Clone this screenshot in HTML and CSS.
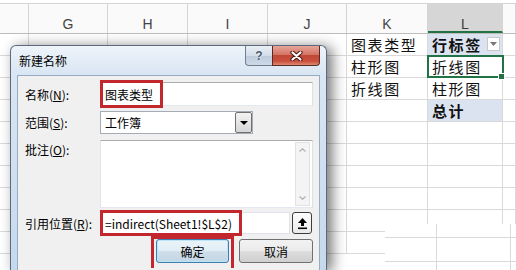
FILE: index.html
```html
<!DOCTYPE html>
<html lang="zh-CN">
<head>
  <meta charset="UTF-8">
  <title>新建名称</title>
  <link rel="stylesheet" href="styles.css">
</head>
<body>
  <div class="sheet">
    <div class="row head">
      <div class="c"></div><div class="c">G</div><div class="c">H</div><div class="c">I</div><div class="c">J</div><div class="c">K</div><div class="c active-col">L</div><div class="c"></div>
    </div>
    <div class="row">
      <div class="c"></div><div class="c"></div><div class="c"></div><div class="c"></div><div class="c"></div>
      <div class="c">图表类型</div>
      <div class="c pivot bold">行标签<span class="filter"><svg width="7" height="4" viewBox="0 0 7 4"><polygon points="0,0 7,0 3.5,4" fill="#777"/></svg></span></div>
      <div class="c"></div>
    </div>
    <div class="row">
      <div class="c"></div><div class="c"></div><div class="c"></div><div class="c"></div><div class="c"></div>
      <div class="c">柱形图</div>
      <div class="c current">折线图</div>
      <div class="c"></div>
    </div>
    <div class="row">
      <div class="c"></div><div class="c"></div><div class="c"></div><div class="c"></div><div class="c"></div>
      <div class="c">折线图</div>
      <div class="c">柱形图</div>
      <div class="c"></div>
    </div>
    <div class="row">
      <div class="c"></div><div class="c"></div><div class="c"></div><div class="c"></div><div class="c"></div>
      <div class="c"></div>
      <div class="c pivot bold">总计</div>
      <div class="c"></div>
    </div>
    <div class="row"><div class="c"></div><div class="c"></div><div class="c"></div><div class="c"></div><div class="c"></div><div class="c"></div><div class="c"></div><div class="c"></div></div>
    <div class="row"><div class="c"></div><div class="c"></div><div class="c"></div><div class="c"></div><div class="c"></div><div class="c"></div><div class="c"></div><div class="c"></div></div>
    <div class="row"><div class="c"></div><div class="c"></div><div class="c"></div><div class="c"></div><div class="c"></div><div class="c"></div><div class="c"></div><div class="c"></div></div>
    <div class="row"><div class="c"></div><div class="c"></div><div class="c"></div><div class="c"></div><div class="c"></div><div class="c"></div><div class="c"></div><div class="c"></div></div>
    <div class="row"><div class="c"></div><div class="c"></div><div class="c"></div><div class="c"></div><div class="c"></div><div class="c"></div><div class="c"></div><div class="c"></div></div>
    <div class="row"><div class="c"></div><div class="c"></div><div class="c"></div><div class="c"></div><div class="c"></div><div class="c"></div><div class="c"></div><div class="c"></div></div>
    <div class="patch"></div>
  </div>

  <div class="dialog">
    <div class="titlebar">
      <span class="title">新建名称</span>
      <div class="caps">
        <span class="cap help">?</span>
        <span class="cap close">
          <svg width="13" height="10" viewBox="0 0 13 10">
            <path d="M2.5 1.5 L10.5 8.5 M10.5 1.5 L2.5 8.5" stroke="#4a1a14" stroke-width="4.2" stroke-linecap="round"/>
            <path d="M2.5 1.5 L10.5 8.5 M10.5 1.5 L2.5 8.5" stroke="#fff" stroke-width="2.2" stroke-linecap="round"/>
          </svg>
        </span>
      </div>
    </div>
    <div class="client">
      <div class="lbl">名称(<u>N</u>):</div>
      <div class="field">
        <div class="box name">图表类型</div>
        <span class="mark mark-name"></span>
      </div>

      <div class="lbl">范围(<u>S</u>):</div>
      <div class="field">
        <div class="box combo">工作簿<span class="drop"><svg width="8" height="4" viewBox="0 0 8 4"><polygon points="0,0 8,0 4,4" fill="#000"/></svg></span></div>
      </div>

      <div class="lbl top">批注(<u>O</u>):</div>
      <div class="field">
        <div class="box memo">
          <div class="vscroll">
            <svg width="7" height="4" viewBox="0 0 7 4"><polyline points="0.5,3.5 3.5,0.8 6.5,3.5" fill="none" stroke="#b0b0b0" stroke-width="1.2"/></svg>
            <svg width="7" height="4" viewBox="0 0 7 4"><polyline points="0.5,0.5 3.5,3.2 6.5,0.5" fill="none" stroke="#b0b0b0" stroke-width="1.2"/></svg>
          </div>
        </div>
      </div>

      <div class="lbl">引用位置(<u>R</u>):</div>
      <div class="field refline">
        <div class="box ref">=indirect(Sheet1!$L$2)</div>
        <span class="pick">
          <svg width="11" height="13" viewBox="0 0 11 13">
            <polygon points="5.5,1 10,6 1,6" fill="#000"/>
            <rect x="4" y="5.5" width="3" height="3.5" fill="#000"/>
            <rect x="1" y="10.5" width="9" height="1.6" fill="#000"/>
          </svg>
        </span>
        <span class="mark mark-ref"></span>
      </div>

      <div class="actions">
        <span class="btn default">确定<span class="mark mark-ok"></span></span>
        <span class="btn">取消</span>
      </div>
    </div>
  </div>
</body>
</html>
```

FILE: styles.css
```css
body {
  margin: 0;
  width: 516px;
  height: 270px;
  overflow: hidden;
  background: #fff;
  font-family: "Noto Sans CJK SC", sans-serif;
  position: relative;
}

/* worksheet */
.sheet {
  padding-top: 3px;
  height: 270px;
  box-sizing: border-box;
  overflow: hidden;
  position: relative;
}
.row {
  display: grid;
  grid-template-columns: 29px 79px 80px 80px 79px 81px 75px 1fr;
  height: 22px;
  box-sizing: border-box;
  border-bottom: 1px solid #d9d9d9;
}
.c {
  border-right: 1px solid #d9d9d9;
  padding-left: 4px;
  font-size: 15px;
  letter-spacing: 1.6px;
  line-height: 21px;
  color: #111;
  white-space: nowrap;
  position: relative;
}
.row.head {
  height: 31px;
  border-top: 1px solid #d4d4d4;
  border-bottom: 1px solid #bdbdbd;
  background: #fafafa;
}
.head .c {
  padding: 0;
  text-align: center;
  font-family: "Liberation Sans", Arial, sans-serif;
  font-size: 14px;
  letter-spacing: 0;
  line-height: 14px;
  padding-top: 13px;
  color: #444;
  border-right-color: #d4d4d4;
}
.head .active-col {
  background: #d6d6d6;
  border-bottom: 2px solid #217346;
  color: #3d3d3d;
}
.pivot {
  background: #dce3f0;
}
.bold {
  font-weight: bold;
}
.filter {
  position: absolute;
  right: 2px;
  top: 3px;
  width: 13px;
  height: 14px;
  box-sizing: border-box;
  border: 1px solid #c8c8c8;
  background: #fff;
  display: flex;
  align-items: center;
  justify-content: center;
}
.current {
  outline: 2px solid #217346;
  outline-offset: -1px;
  z-index: 1;
}
.current::after {
  content: "";
  position: absolute;
  right: -3px;
  bottom: -3px;
  width: 5px;
  height: 5px;
  background: #217346;
  border: 1px solid #fff;
}
.patch {
  position: absolute;
  left: 385px;
  top: 224px;
  width: 131px;
  height: 46px;
  background:
    linear-gradient(#d9d9d9, #d9d9d9) 51px 0 / 1px 100% no-repeat,
    linear-gradient(#d9d9d9, #d9d9d9) 125px 0 / 1px 100% no-repeat,
    linear-gradient(#d9d9d9, #d9d9d9) 0 13px / 100% 1px no-repeat,
    linear-gradient(#d9d9d9, #d9d9d9) 0 37px / 100% 1px no-repeat,
    #fff;
}

/* dialog */
.dialog {
  position: absolute;
  left: 10px;
  top: 45px;
  width: 317px;
  height: 225px;
  box-sizing: border-box;
  border: 1px solid #5b6a7c;
  border-bottom: none;
  border-radius: 6px 6px 0 0;
  background: linear-gradient(#eef4fa 0, #d9e6f3 28px, #c5d9ed 100%);
  box-shadow: 5px 2px 14px rgba(0, 0, 0, 0.55);
  font-size: 12px;
  color: #000;
}
.titlebar {
  height: 29px;
  display: flex;
  align-items: center;
  padding-left: 8px;
}
.title {
  font-size: 12px;
}
.caps {
  margin-left: auto;
  margin-right: 6px;
  align-self: flex-start;
  display: flex;
}
.cap {
  height: 20px;
  box-sizing: border-box;
  display: flex;
  align-items: center;
  justify-content: center;
}
.help {
  width: 27px;
  border: 1px solid #6f7f90;
  border-top: none;
  border-right: none;
  border-radius: 0 0 0 4px;
  background: linear-gradient(#e8eef5 0, #d3deea 50%, #bccbdb 51%, #cdd9e6 100%);
  color: #4a5a6c;
  font-family: "Liberation Sans", Arial, sans-serif;
  font-weight: bold;
  font-size: 12px;
  text-shadow: 0 0 2px #fff;
}
.close {
  width: 48px;
  border: 1px solid #5a2a24;
  border-top: none;
  border-radius: 0 0 4px 0;
  background: linear-gradient(#e6a497 0, #d47566 45%, #c14736 50%, #c9503e 80%, #dd8a70 100%);
}
.client {
  margin: 0 6px;
  height: 195px;
  box-sizing: border-box;
  border: 1px solid #98abc0;
  border-bottom: none;
  background: #f0f0f0;
  padding: 6px 6px 0 7px;
  display: grid;
  grid-template-columns: 75px 1fr;
  grid-template-rows: 24px 23px 68px 22px 24px;
  row-gap: 5px;
  align-items: center;
}
.lbl {
  white-space: nowrap;
}
.lbl.top {
  align-self: start;
  padding-top: 2px;
}
.field {
  position: relative;
  height: 100%;
  display: flex;
}
.box {
  box-sizing: border-box;
  height: 100%;
  background: #fff;
  border: 1px solid #abadb3;
  border-color: #abadb3 #dbdfe6 #e3e9ef #e2e3ea;
  padding-left: 4px;
  display: flex;
  align-items: center;
}
.name {
  width: 213px;
}
.combo {
  width: 153px;
  border: 1px solid #a5acb5;
  position: relative;
}
.drop {
  margin-left: auto;
  width: 17px;
  height: 21px;
  box-sizing: border-box;
  border: 1px solid #707070;
  border-radius: 2px;
  background: linear-gradient(#f3f3f3, #e5e5e5 50%, #d6d6d6);
  display: flex;
  align-items: center;
  justify-content: center;
}
.memo {
  width: 213px;
  margin-top: 1px;
  justify-content: flex-end;
  align-items: stretch;
  padding: 1px 2px 1px 0;
}
.vscroll {
  width: 15px;
  box-sizing: border-box;
  border: 1px solid #e2e2e2;
  background: #f4f4f4;
  display: flex;
  flex-direction: column;
  justify-content: space-between;
  align-items: center;
  padding: 5px 0;
}
.refline {
  align-items: center;
  gap: 2px;
}
.ref {
  width: 190px;
  border-color: #e2e3ea;
}
.pick {
  width: 20px;
  height: 22px;
  box-sizing: border-box;
  border: 1px solid #3c3c3c;
  border-radius: 3px;
  background: linear-gradient(#fdfdfd, #eaeaea);
  display: flex;
  align-items: center;
  justify-content: center;
}
.actions {
  grid-column: 1 / -1;
  display: flex;
  justify-content: flex-end;
  gap: 10px;
  height: 24px;
}
.btn {
  width: 74px;
  height: 24px;
  box-sizing: border-box;
  border: 1px solid #707070;
  border-radius: 3px;
  background: linear-gradient(#f2f2f2, #ebebeb 50%, #dddddd 51%, #cfcfcf);
  display: flex;
  align-items: center;
  justify-content: center;
  position: relative;
}
.btn.default {
  width: 73px;
  border-color: #3c7fb1;
  box-shadow: inset 0 0 0 1px #bde3f7;
  background: linear-gradient(#eaf4fa, #e1edf5 50%, #d0dfea 51%, #c2d6e4);
}

/* red annotation frames */
.mark {
  position: absolute;
  border: 3px solid #c1272d;
  box-sizing: border-box;
}
.mark-name {
  left: 0;
  top: -2px;
  width: 63px;
  height: 28px;
}
.mark-ref {
  left: 0;
  top: -2px;
  width: 142px;
  height: 26px;
}
.mark-ok {
  left: -6px;
  top: -4px;
  width: 83px;
  height: 32px;
  border-bottom: none;
}
```
